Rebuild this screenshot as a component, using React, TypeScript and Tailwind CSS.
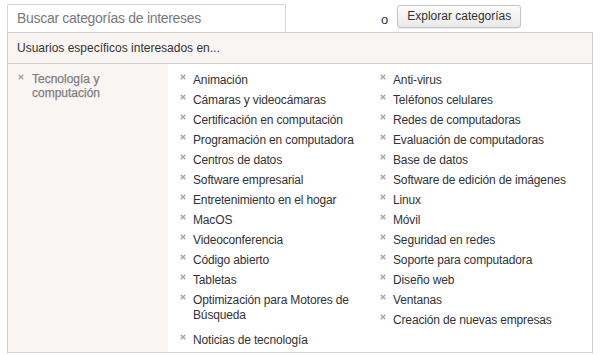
import React from "react";

const col1: string[][] = [
  ["Animación"],
  ["Cámaras y videocámaras"],
  ["Certificación en computación"],
  ["Programación en computadora"],
  ["Centros de datos"],
  ["Software empresarial"],
  ["Entretenimiento en el hogar"],
  ["MacOS"],
  ["Videoconferencia"],
  ["Código abierto"],
  ["Tabletas"],
  ["Optimización para Motores de", "Búsqueda"],
  ["Noticias de tecnología"],
];

const col2: string[][] = [
  ["Anti-virus"],
  ["Teléfonos celulares"],
  ["Redes de computadoras"],
  ["Evaluación de computadoras"],
  ["Base de datos"],
  ["Software de edición de imágenes"],
  ["Linux"],
  ["Móvil"],
  ["Seguridad en redes"],
  ["Soporte para computadora"],
  ["Diseño web"],
  ["Ventanas"],
  ["Creación de nuevas empresas"],
];

function X() {
  return (
    <svg width="6" height="6" viewBox="0 0 6 6" className="mt-[1px] shrink-0">
      <path d="M0.7 0.7 L5.3 5.3 M5.3 0.7 L0.7 5.3" stroke="#a6a6a6" strokeWidth="1.4" />
    </svg>
  );
}

function Item({ lines }: { lines: string[] }) {
  const multi = lines.length > 1;
  return (
    <div className={`flex items-start gap-[7px] py-[2.5px] ${multi ? "mb-[5px]" : ""}`}>
      <X />
      <div className="text-[12px] leading-[15px] text-[#333] tracking-[-0.15px]">
        {lines.map((l, i) => (
          <div key={i}>{l}</div>
        ))}
      </div>
    </div>
  );
}

export default function App() {
  return (
    <div
      className="w-[600px] h-[355px] bg-white overflow-hidden"
      style={{ fontFamily: '"Liberation Sans", Arial, sans-serif' }}
    >
      <div className="flex items-start pl-[7px] pt-[4px]">
        <div className="w-[279px] h-[28px] border border-b-0 border-[#d4d4d4] rounded-tl-[2px] rounded-tr-[2px] px-[9px] flex items-center text-[14px] tracking-[-0.3px] text-[#7a7a7a]">
          Buscar categorías de intereses
        </div>
        <div className="ml-[95px] mt-[8px] text-[13px] text-[#333] leading-[15px]">o</div>
        <button className="ml-[9px] mt-[1px] h-[23px] px-[9px] rounded-[3px] border border-[#c4c4c4] bg-gradient-to-b from-[#fdfdfd] to-[#e9e9e9] text-[12px] text-[#333] leading-[15px] shadow-[0_1px_1px_rgba(0,0,0,0.08)]">
          Explorar categorías
        </button>
      </div>
      <div className="ml-[7px] w-[586px] h-[321px] border border-[#cfcfcf] flex flex-col">
        <div className="h-[31px] shrink-0 bg-[#f8f5f3] border-b border-[#cfcfcf] flex items-center pl-[9px] text-[12px] text-[#333]">
          Usuarios específicos interesados en...
        </div>
        <div className="flex flex-1">
          <div className="w-[160px] bg-[#f8f5f3] pl-[10px] pt-[9px]">
            <div className="flex items-start gap-[8px]">
              <X />
              <div className="text-[12px] leading-[14px] text-[#808080] -mt-[1px]" style={{ WebkitTextStroke: "0.25px #808080" }}>
                <div>Tecnología y</div>
                <div>computación</div>
              </div>
            </div>
          </div>
          <div className="flex-1 flex pl-[12px] pt-[6px]">
            <div className="w-[200px] flex flex-col">
              {col1.map((l, i) => (
                <Item key={i} lines={l} />
              ))}
            </div>
            <div className="flex-1 flex flex-col">
              {col2.map((l, i) => (
                <Item key={i} lines={l} />
              ))}
            </div>
          </div>
        </div>
      </div>
    </div>
  );
}
